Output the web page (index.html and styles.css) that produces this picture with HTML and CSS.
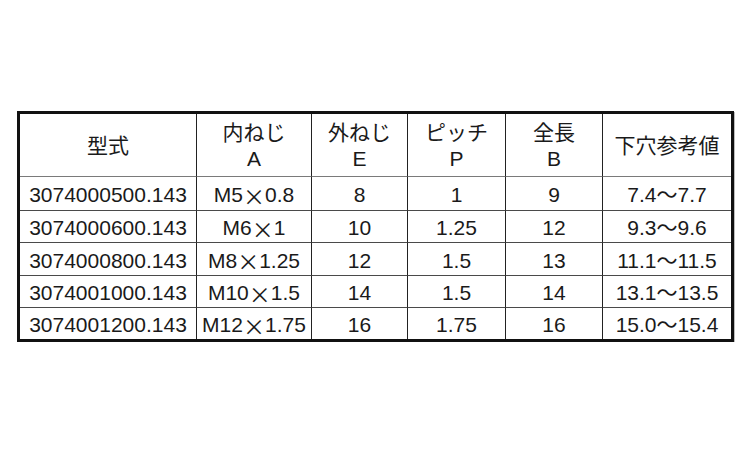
FILE: index.html
```html
<!DOCTYPE html>
<html lang="ja">
<head>
<meta charset="utf-8">
<title>型式表</title>
<link rel="stylesheet" href="styles.css">
</head>
<body>
<div class="sheet">
  <div class="grid">
    <div class="c h">型式</div>
    <div class="c h">内ねじ<br>A</div>
    <div class="c h">外ねじ<br>E</div>
    <div class="c h">ピッチ<br>P</div>
    <div class="c h">全長<br>B</div>
    <div class="c h">下穴参考値</div>

    <div class="c">3074000500.143</div>
    <div class="c">M5<span class="mul">×</span>0.8</div>
    <div class="c">8</div>
    <div class="c">1</div>
    <div class="c">9</div>
    <div class="c">7.4～7.7</div>

    <div class="c">3074000600.143</div>
    <div class="c">M6<span class="mul">×</span>1</div>
    <div class="c">10</div>
    <div class="c">1.25</div>
    <div class="c">12</div>
    <div class="c">9.3～9.6</div>

    <div class="c">3074000800.143</div>
    <div class="c">M8<span class="mul">×</span>1.25</div>
    <div class="c">12</div>
    <div class="c">1.5</div>
    <div class="c">13</div>
    <div class="c">11.1～11.5</div>

    <div class="c">3074001000.143</div>
    <div class="c">M10<span class="mul">×</span>1.5</div>
    <div class="c">14</div>
    <div class="c">1.5</div>
    <div class="c">14</div>
    <div class="c">13.1～13.5</div>

    <div class="c">3074001200.143</div>
    <div class="c">M12<span class="mul">×</span>1.75</div>
    <div class="c">16</div>
    <div class="c">1.75</div>
    <div class="c">16</div>
    <div class="c">15.0～15.4</div>
  </div>
</div>
</body>
</html>
```

FILE: styles.css
```css
html, body {
  margin: 0;
  background: #ffffff;
}
body {
  font-family: "Liberation Sans", "Noto Sans CJK JP", sans-serif;
  color: #1a1a1a;
}
.sheet {
  padding: 111px 0 0 17px;
}
.grid {
  display: grid;
  width: 711px;
  grid-template-columns: 177px 115px 96px 98px 97px 128px;
  grid-template-rows: 63px 34px 32px 33px 32px 31px;
  border: 3px solid #111111;
  box-shadow: 1px 1px 0 #bdbdbd;
}
.c {
  display: flex;
  align-items: center;
  justify-content: center;
  text-align: center;
  box-sizing: border-box;
  font-size: 21px;
  line-height: 24px;
  padding-top: 3px;
  border-right: 1px solid #222222;
  border-bottom: 1px solid #4a4a4a;
  white-space: nowrap;
}
.c:nth-child(6n) {
  border-right: 0;
}
.c:nth-last-child(-n+6) {
  border-bottom: 0;
}
.h {
  line-height: 26px;
  padding-top: 2px;
  border-bottom-color: #7a7a7a;
}
.mul {
  font-family: "Noto Sans CJK JP", sans-serif;
  font-size: 1.05em;
  line-height: 1;
}
```
